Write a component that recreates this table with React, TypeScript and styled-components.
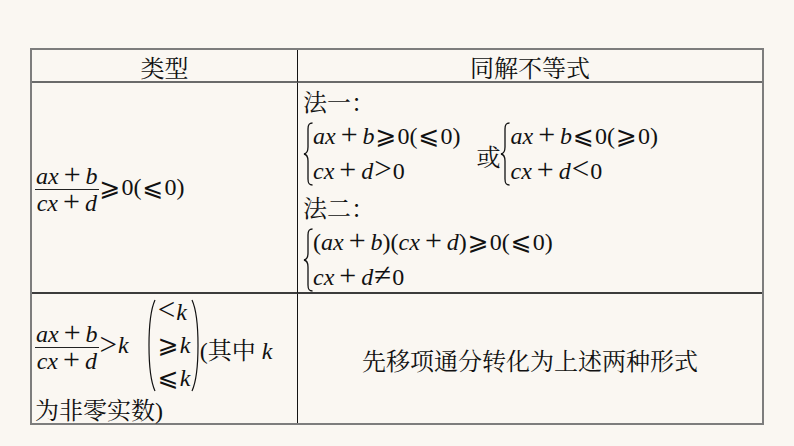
import React from "react";
import styled, { createGlobalStyle } from "styled-components";

const Global = createGlobalStyle`
  html, body { margin: 0; padding: 0; background: #faf7f2; }
  body {
    font-family: "Liberation Serif", "Noto Serif CJK SC", serif;
    color: #111;
    width: 794px;
    height: 446px;
    overflow: hidden;
  }
`;

const Page = styled.div`
  padding: 48px 0 0 30px;
`;

const Table = styled.div`
  box-sizing: border-box;
  width: 734px;
  display: grid;
  grid-template-columns: 266px 464px;
  grid-template-rows: 33px 211px 129px;
  border: 2px solid #7d7d7d;
`;

const Cell = styled.div<{ $divider?: boolean; $bottom?: "head" | "row" }>`
  box-sizing: border-box;
  position: relative;
  font-size: 24px;
  border-right: ${(p) => (p.$divider ? "1px solid #141414" : "none")};
  border-bottom: ${(p) =>
    p.$bottom === "head" ? "2px solid #6a6a6a" : p.$bottom === "row" ? "2px solid #3c3c3c" : "none"};
`;

const HeadCell = styled(Cell)`
  display: flex;
  align-items: center;
  justify-content: center;
  font-family: "Noto Serif CJK SC", serif;
  padding-top: 1px;
`;

const TypeCell = styled(Cell)`
  display: flex;
  align-items: center;
  padding-left: 3px;
`;

const SolveCell = styled(Cell)`
  padding-left: 5px;
  display: flex;
  flex-direction: column;
`;

const CenterCell = styled(Cell)`
  display: flex;
  align-items: center;
  justify-content: center;
  font-family: "Noto Serif CJK SC", serif;
  padding-top: 2px;
`;

const Han = styled.span`
  font-family: "Noto Serif CJK SC", serif;
`;

const V = styled.i`
  font-family: "Liberation Serif", serif;
  font-style: italic;
`;

const Op = styled.span`
  font-family: "Liberation Serif", serif;
  margin: 0 5px;
  font-size: 30px;
  line-height: 0;
`;

const R = styled.span<{ $wide?: boolean }>`
  font-family: "Liberation Serif", "DejaVu Sans", serif;
  font-size: ${(p) => (p.$wide ? 31 : 25)}px;
  line-height: 0;
  margin: 0 ${(p) => (p.$wide ? 1 : 1)}px;
`;

const Line = styled.div<{ $h: number }>`
  height: ${(p) => p.$h}px;
  line-height: ${(p) => p.$h}px;
  white-space: nowrap;
`;

const Frac = styled.span`
  display: inline-flex;
  flex-direction: column;
  align-items: center;
  margin-top: 4px;
`;

const Num = styled.span`
  line-height: 26px;
  height: 26px;
  padding: 0 1px;
`;

const Den = styled.span`
  line-height: 26px;
  height: 26px;
  border-top: 1px solid #222;
  padding: 0 1px;
  align-self: stretch;
  text-align: center;
`;

const Inline = styled.div`
  display: flex;
  align-items: center;
  white-space: nowrap;
`;

const SysRow = styled.div`
  display: flex;
  align-items: center;
`;

const System = styled.div`
  display: flex;
  align-items: center;
`;

const Lines = styled.div`
  display: flex;
  flex-direction: column;
`;

const Or = styled(Han)`
  margin: 0 0 0 16px;
  padding-top: 2px;
`;

const BraceSvg = styled.svg`
  flex: none;
  display: block;
`;

const Brace: React.FC<{ h: number }> = ({ h }) => {
  const m = h / 2;
  const d = `M9.5,1 C6,1 5,2.5 5,7 L5,${m - 7} C5,${m - 2} 3.5,${m - 0.5} 1,${m} C3.5,${m + 0.5} 5,${m + 2} 5,${m + 7} L5,${h - 7} C5,${h - 2.5} 6,${h - 1} 9.5,${h - 1}`;
  return (
    <BraceSvg width={10} height={h} viewBox={`0 0 10 ${h}`}>
      <path d={d} fill="none" stroke="#111" strokeWidth={1.3} />
    </BraceSvg>
  );
};

const Paren: React.FC<{ h: number; right?: boolean }> = ({ h, right }) => {
  const d = right
    ? `M1,1 C6,12 7,${h * 0.3} 7,${h / 2} C7,${h * 0.7} 6,${h - 12} 1,${h - 1}`
    : `M7,1 C2,12 1,${h * 0.3} 1,${h / 2} C1,${h * 0.7} 2,${h - 12} 7,${h - 1}`;
  return (
    <BraceSvg width={8} height={h} viewBox={`0 0 8 ${h}`}>
      <path d={d} fill="none" stroke="#111" strokeWidth={1.2} />
    </BraceSvg>
  );
};

const Row2Left = styled(Cell)`
  display: flex;
  flex-direction: column;
  padding-left: 3px;
`;

const FirstLine = styled.div`
  display: flex;
  align-items: center;
  height: 98px;
  padding-top: 2px;
  white-space: nowrap;
`;

const ParenGroup = styled.div`
  display: flex;
  align-items: center;
  margin-left: 19px;
  margin-top: 1px;
`;

const Stack = styled.div`
  display: flex;
  flex-direction: column;
  padding-left: 1px;
  width: 34px;
`;

const StackItem = styled.div`
  line-height: 33px;
  height: 33px;
`;

const Tail = styled.span`
  margin-left: 1px;
  margin-top: 6px;
`;

const FracSum: React.FC<{ top: [string, string]; bot: [string, string] }> = ({ top, bot }) => (
  <Frac>
    <Num>
      <V>{top[0]}</V>
      <Op>+</Op>
      <V>{top[1]}</V>
    </Num>
    <Den>
      <V>{bot[0]}</V>
      <Op>+</Op>
      <V>{bot[1]}</V>
    </Den>
  </Frac>
);

export default function App() {
  return (
    <>
      <Global />
      <Page>
        <Table>
          <HeadCell $divider $bottom="head">类型</HeadCell>
          <HeadCell $bottom="head">同解不等式</HeadCell>

          <TypeCell $divider $bottom="row">
            <Inline>
              <FracSum top={["ax", "b"]} bot={["cx", "d"]} />
              <R>⩾</R>0(<R>⩽</R>0)
            </Inline>
          </TypeCell>
          <SolveCell $bottom="row">
            <Line $h={36}>
              <Han>法一：</Han>
            </Line>
            <SysRow>
              <System>
                <Brace h={64} />
                <Lines>
                  <Line $h={35}>
                    <V>ax</V>
                    <Op>+</Op>
                    <V>b</V>
                    <R>⩾</R>0(<R>⩽</R>0)
                  </Line>
                  <Line $h={35}>
                    <V>cx</V>
                    <Op>+</Op>
                    <V>d</V>
                    <R $wide>&gt;</R>0
                  </Line>
                </Lines>
              </System>
              <Or>或</Or>
              <System>
                <Brace h={64} />
                <Lines>
                  <Line $h={35}>
                    <V>ax</V>
                    <Op>+</Op>
                    <V>b</V>
                    <R>⩽</R>0(<R>⩾</R>0)
                  </Line>
                  <Line $h={35}>
                    <V>cx</V>
                    <Op>+</Op>
                    <V>d</V>
                    <R $wide>&lt;</R>0
                  </Line>
                </Lines>
              </System>
            </SysRow>
            <Line $h={36}>
              <Han>法二：</Han>
            </Line>
            <System>
              <Brace h={64} />
              <Lines>
                <Line $h={35}>
                  (<V>ax</V>
                  <Op>+</Op>
                  <V>b</V>)(<V>cx</V>
                  <Op>+</Op>
                  <V>d</V>)<R>⩾</R>0(<R>⩽</R>0)
                </Line>
                <Line $h={35}>
                  <V>cx</V>
                  <Op>+</Op>
                  <V>d</V>
                  <R $wide>≠</R>0
                </Line>
              </Lines>
            </System>
          </SolveCell>

          <Row2Left $divider>
            <FirstLine>
              <FracSum top={["ax", "b"]} bot={["cx", "d"]} />
              <R $wide>&gt;</R>
              <V>k</V>
              <ParenGroup>
                <Paren h={93} />
                <Stack>
                  <StackItem>
                    <R $wide>&lt;</R>
                    <V>k</V>
                  </StackItem>
                  <StackItem>
                    <R>⩾</R>
                    <V>k</V>
                  </StackItem>
                  <StackItem>
                    <R>⩽</R>
                    <V>k</V>
                  </StackItem>
                </Stack>
                <Paren h={93} right />
              </ParenGroup>
              <Tail>
                (<Han>其中</Han> <V>k</V>
              </Tail>
            </FirstLine>
            <Line $h={30}>
              <Han>为非零实数</Han>)
            </Line>
          </Row2Left>
          <CenterCell>先移项通分转化为上述两种形式</CenterCell>
        </Table>
      </Page>
    </>
  );
}
